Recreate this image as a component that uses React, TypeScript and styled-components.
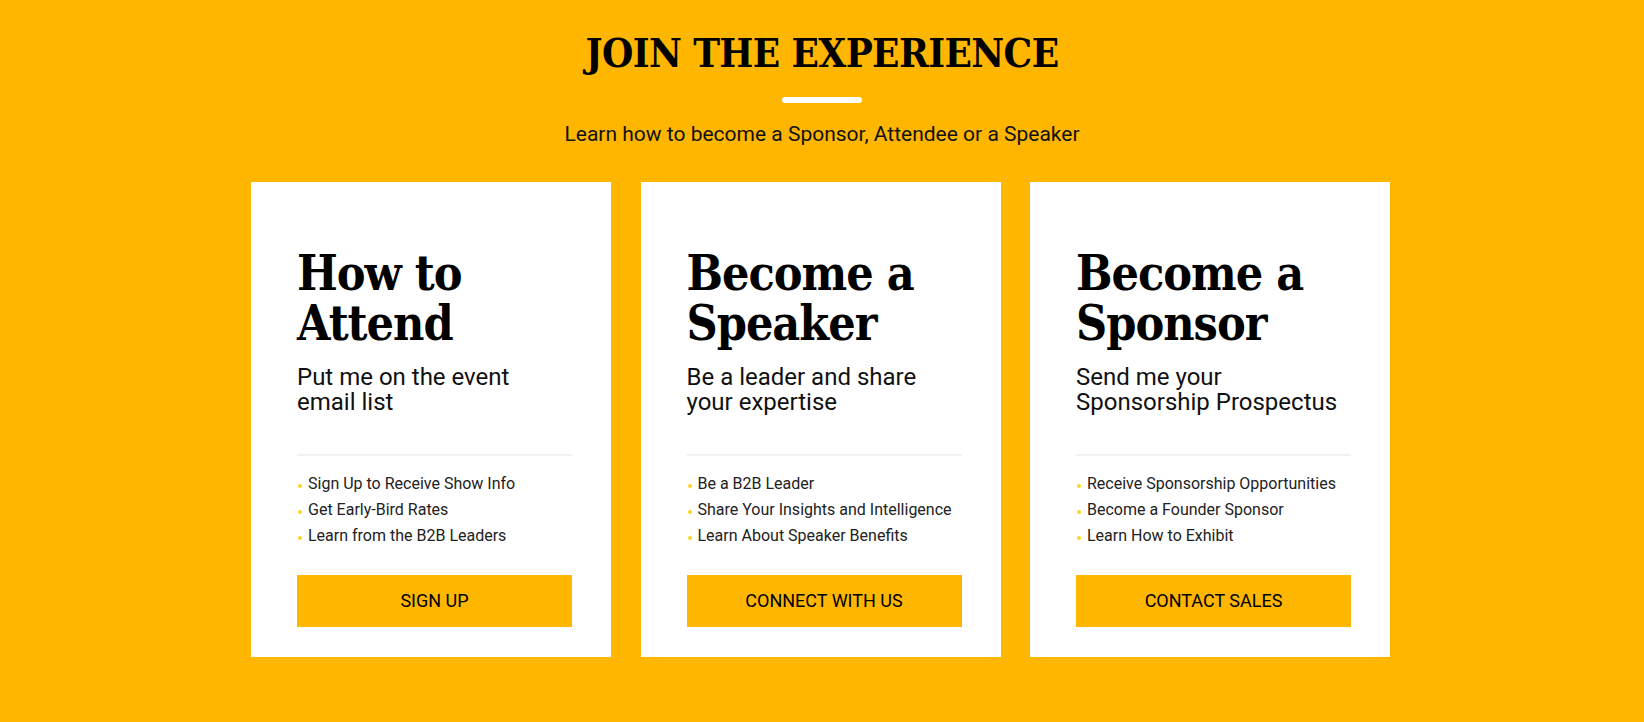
import React from "react";
import styled, { createGlobalStyle } from "styled-components";

const YELLOW = "#FFB600";

const GlobalStyle = createGlobalStyle`
  html, body {
    margin: 0;
    padding: 0;
    background: ${YELLOW};
  }
  body {
    font-family: Roboto, "Liberation Sans", Arial, sans-serif;
    color: #111;
  }
  * { box-sizing: border-box; }
`;

const Section = styled.section`
  min-height: 722px;
  background: ${YELLOW};
  padding-top: 29px;
  display: flex;
  flex-direction: column;
  align-items: center;
`;

const Title = styled.h2`
  margin: 0;
  font-family: "DejaVu Serif Condensed", "DejaVu Serif", serif;
  font-stretch: condensed;
  font-weight: 700;
  font-size: 40px;
  line-height: 48px;
  letter-spacing: -0.6px;
  color: #000;
  text-transform: uppercase;
`;

const Bar = styled.span`
  display: block;
  width: 80px;
  height: 6px;
  border-radius: 3px;
  background: #fff;
  margin-top: 20px;
`;

const Lead = styled.p`
  margin: 16.5px 0 0;
  font-size: 21px;
  line-height: 28px;
  color: #111;
`;

const Cards = styled.div`
  margin-top: 34px;
  display: grid;
  grid-template-columns: repeat(3, 360px);
  column-gap: 29.5px;
  padding-right: 3px;
`;

const Card = styled.article`
  background: #fff;
  height: 475px;
  padding: 66px 39px 30px 46px;
  display: flex;
  flex-direction: column;
`;

const CardTitle = styled.h3`
  margin: 0;
  font-family: "DejaVu Serif Condensed", "DejaVu Serif", serif;
  font-stretch: condensed;
  font-weight: 700;
  font-size: 48px;
  line-height: 50px;
  letter-spacing: -1px;
  color: #000;
`;

const CardLead = styled.p`
  margin: 17px 0 0;
  font-size: 24px;
  line-height: 25px;
  color: #111;
`;

const Divider = styled.hr`
  margin: 39px 0 0;
  border: 0;
  height: 2px;
  background: #f1f1f1;
`;

const List = styled.ul`
  margin: 15px 0 0;
  padding: 0;
  list-style: none;
`;

const Item = styled.li`
  position: relative;
  padding-left: 11px;
  font-size: 16px;
  line-height: 26px;
  color: #222;

  &::before {
    content: "";
    position: absolute;
    left: 1px;
    top: 13px;
    width: 4px;
    height: 4px;
    border-radius: 50%;
    background: #ffd21f;
  }
`;

const Button = styled.a`
  margin-top: auto;
  height: 52px;
  display: flex;
  align-items: center;
  justify-content: center;
  background: ${YELLOW};
  color: #000;
  font-size: 18px;
  font-weight: 400;
  text-transform: uppercase;
  text-decoration: none;
  cursor: pointer;
`;

type CardData = {
  title: [string, string];
  lead: [string, string];
  items: string[];
  cta: string;
};

const cards: CardData[] = [
  {
    title: ["How to", "Attend"],
    lead: ["Put me on the event", "email list"],
    items: [
      "Sign Up to Receive Show Info",
      "Get Early-Bird Rates",
      "Learn from the B2B Leaders",
    ],
    cta: "Sign Up",
  },
  {
    title: ["Become a", "Speaker"],
    lead: ["Be a leader and share", "your expertise"],
    items: [
      "Be a B2B Leader",
      "Share Your Insights and Intelligence",
      "Learn About Speaker Benefits",
    ],
    cta: "Connect With Us",
  },
  {
    title: ["Become a", "Sponsor"],
    lead: ["Send me your", "Sponsorship Prospectus"],
    items: [
      "Receive Sponsorship Opportunities",
      "Become a Founder Sponsor",
      "Learn How to Exhibit",
    ],
    cta: "Contact Sales",
  },
];

export default function App() {
  return (
    <>
      <GlobalStyle />
      <Section>
        <Title>Join the Experience</Title>
        <Bar />
        <Lead>Learn how to become a Sponsor, Attendee or a Speaker</Lead>
        <Cards>
          {cards.map((c) => (
            <Card key={c.cta}>
              <CardTitle>
                {c.title[0]}
                <br />
                {c.title[1]}
              </CardTitle>
              <CardLead>
                {c.lead[0]}
                <br />
                {c.lead[1]}
              </CardLead>
              <Divider />
              <List>
                {c.items.map((it) => (
                  <Item key={it}>{it}</Item>
                ))}
              </List>
              <Button>{c.cta}</Button>
            </Card>
          ))}
        </Cards>
      </Section>
    </>
  );
}
